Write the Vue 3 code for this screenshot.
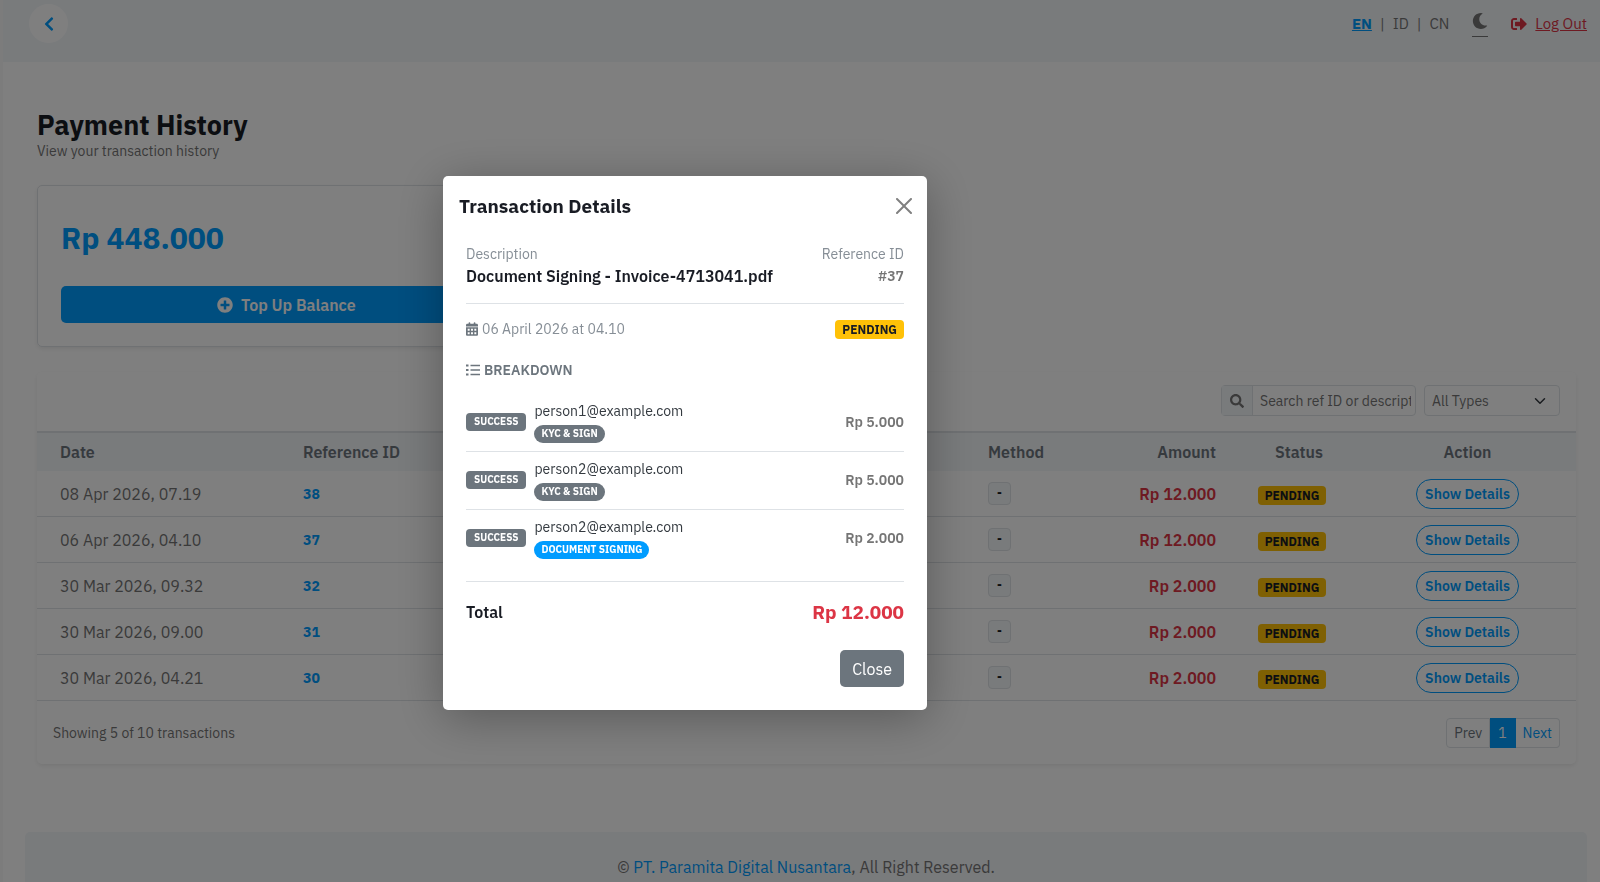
<template>
  <div class="page">
    <header class="topbar">
      <button class="back" type="button" aria-label="Back">
        <svg viewBox="0 0 320 512" width="10" height="16"><path d="M34.5 239L228.900 44.700c9.400-9.400 24.600-9.400 33.900 0l22.700 22.700c9.400 9.400 9.400 24.500 0 33.900L131.500 256l154 154.700c9.300 9.400 9.300 24.500 0 33.900l-22.700 22.700c-9.400 9.400-24.600 9.400-33.900 0L34.500 273c-9.400-9.400-9.400-24.600 0-34z" /></svg>
      </button>
      <nav class="top-nav">
        <div class="langs">
          <a href="#" class="active">EN</a><span>|</span><a href="#">ID</a><span>|</span><a href="#">CN</a>
        </div>
        <a href="#" class="theme" aria-label="Dark mode">
          <svg viewBox="0 0 512 512" width="16" height="16"><path d="M283.2 512c79 0 151.100-35.900 198.900-94.800 7.100-8.700-.6-21.400-11.600-19.300-124.200 23.600-238.300-71.600-238.300-197 0-72.200 38.700-138.600 101.500-174.400 9.700-5.500 7.300-20.200-3.700-22.200A258.200 258.200 0 0 0 283.200 0c-141.300 0-256 114.500-256 256 0 141.300 114.500 256 256 256z" /></svg>
        </a>
        <a href="#" class="logout">
          <svg viewBox="0 0 512 512" width="16" height="16"><path d="M497 273L329 441c-15 15-41 4.500-41-17v-96H152c-13.300 0-24-10.700-24-24v-96c0-13.300 10.700-24 24-24h136V88c0-21.400 25.900-32 41-17l168 168c9.300 9.400 9.300 24.600 0 34zM192 436v-40c0-6.600-5.400-12-12-12H96c-17.700 0-32-14.300-32-32V160c0-17.700 14.300-32 32-32h84c6.600 0 12-5.400 12-12V76c0-6.600-5.400-12-12-12H96c-53 0-96 43-96 96v192c0 53 43 96 96 96h84c6.600 0 12-5.400 12-12z" /></svg>
          <span>Log Out</span>
        </a>
      </nav>
    </header>

    <main class="content">
      <h1>Payment History</h1>
      <p class="subtitle">View your transaction history</p>

      <section class="balance">
        <div class="amount">Rp 448.000</div>
        <button class="topup" type="button">
          <svg viewBox="0 0 512 512" width="16" height="16"><path d="M256 8C119 8 8 119 8 256s111 248 248 248 248-111 248-248S393 8 256 8zm144 276c0 6.600-5.400 12-12 12h-92v92c0 6.600-5.400 12-12 12h-56c-6.600 0-12-5.400-12-12v-92h-92c-6.600 0-12-5.400-12-12v-56c0-6.600 5.400-12 12-12h92v-92c0-6.600 5.400-12 12-12h56c6.600 0 12 5.400 12 12v92h92c6.600 0 12 5.400 12 12v56z" /></svg>
          Top Up Balance
        </button>
      </section>

      <section class="history">
        <div class="toolbar">
          <div class="search">
            <label for="search" aria-label="Search">
              <svg viewBox="0 0 512 512" width="14" height="14"><path d="M505 442.700L405.300 343c-4.500-4.500-10.600-7-17-7H372c27.600-35.300 44-79.700 44-128C416 93.100 322.900 0 208 0S0 93.100 0 208s93.100 208 208 208c48.300 0 92.700-16.400 128-44v16.300c0 6.400 2.500 12.500 7 17l99.700 99.700c9.400 9.400 24.600 9.400 33.900 0l28.300-28.300c9.400-9.400 9.400-24.600.1-34zM208 336c-70.700 0-128-57.200-128-128 0-70.700 57.200-128 128-128 70.700 0 128 57.200 128 128 0 70.700-57.200 128-128 128z" /></svg>
            </label>
            <input id="search" v-model="keyword" type="text" placeholder="Search ref ID or description" />
          </div>
          <div class="filter">
            <select v-model="type" aria-label="Transaction type">
              <option value="">All Types</option>
            </select>
            <svg viewBox="0 0 16 16" width="12" height="12"><path d="m2 5 6 6 6-6" /></svg>
          </div>
        </div>

        <table>
          <colgroup>
            <col class="c-date" /><col class="c-ref" /><col /><col class="c-method" /><col class="c-amount" /><col class="c-status" /><col class="c-action" />
          </colgroup>
          <thead>
            <tr>
              <th>Date</th>
              <th>Reference ID</th>
              <th></th>
              <th>Method</th>
              <th class="right">Amount</th>
              <th class="center">Status</th>
              <th class="center">Action</th>
            </tr>
          </thead>
          <tbody>
            <tr v-for="t in transactions" :key="t.id">
              <td>{{ t.date }}</td>
              <td class="ref">{{ t.id }}</td>
              <td></td>
              <td><span class="method">-</span></td>
              <td class="right money">{{ t.amount }}</td>
              <td class="center"><span class="badge pending">PENDING</span></td>
              <td class="center"><button class="details" type="button" @click="open = true">Show Details</button></td>
            </tr>
          </tbody>
        </table>

        <div class="table-footer">
          <span>Showing 5 of 10 transactions</span>
          <div class="pagination">
            <button type="button" disabled>Prev</button>
            <button type="button" class="current">1</button>
            <button type="button">Next</button>
          </div>
        </div>
      </section>
    </main>

    <footer class="footer">
      © <a href="#">PT. Paramita Digital Nusantara</a>, All Right Reserved.
    </footer>

    <div v-if="open" class="backdrop" @click.self="open = false">
      <div class="modal" role="dialog" aria-labelledby="modal-title">
        <div class="modal-header">
          <h2 id="modal-title">Transaction Details</h2>
          <button type="button" class="x" aria-label="Close" @click="open = false">
            <svg viewBox="0 0 16 16" width="16" height="16"><path d="M.293.293a1 1 0 011.414 0L8 6.586 14.293.293a1 1 0 111.414 1.414L9.414 8l6.293 6.293a1 1 0 01-1.414 1.414L8 9.414l-6.293 6.293a1 1 0 01-1.414-1.414L6.586 8 .293 1.707a1 1 0 010-1.414z" /></svg>
          </button>
        </div>
        <div class="modal-body">
          <div class="summary">
            <div>
              <div class="label">Description</div>
              <div class="name">Document Signing - Invoice-4713041.pdf</div>
            </div>
            <div class="right">
              <div class="label">Reference ID</div>
              <div class="number">#37</div>
            </div>
          </div>

          <div class="when">
            <span class="label with-icon">
              <svg viewBox="0 0 448 512" width="12" height="14"><path fill-rule="evenodd" d="M128 0c17.700 0 32 14.300 32 32v32h128V32c0-17.700 14.300-32 32-32s32 14.300 32 32v32h48c26.500 0 48 21.500 48 48v48H0v-48c0-26.500 21.500-48 48-48h48V32c0-17.700 14.300-32 32-32zM0 192h448v272c0 26.500-21.500 48-48 48H48c-26.500 0-48-21.500-48-48zM64 248v72h72v-72zM188 248v72h72v-72zM312 248v72h72v-72zM64 376v72h72v-72zM188 376v72h72v-72zM312 376v72h72v-72z" /></svg>
              06 April 2026 at 04.10
            </span>
            <span class="badge pending">PENDING</span>
          </div>

          <h3 class="with-icon">
            <svg viewBox="0 0 14 14" width="14" height="14"><path d="M0 1.500h2.500v2H0zM0 6h2.500v2H0zM0 10.500h2.500v2H0zM4.500 1.800H14v1.400H4.500zM4.500 6.300H14v1.400H4.500zM4.500 10.800H14v1.400H4.500z" /></svg>
            BREAKDOWN
          </h3>

          <ul class="items">
            <li v-for="(item, i) in items" :key="i">
              <span class="badge small">SUCCESS</span>
              <div class="who">
                <div class="email">{{ item.email }}</div>
                <span class="badge small pill" :class="{ blue: item.kind === 'DOCUMENT SIGNING' }">{{ item.kind }}</span>
              </div>
              <span class="number">{{ item.price }}</span>
            </li>
          </ul>

          <div class="total">
            <span>Total</span>
            <strong>Rp 12.000</strong>
          </div>

          <div class="actions">
            <button type="button" class="close" @click="open = false">Close</button>
          </div>
        </div>
      </div>
    </div>
  </div>
</template>

<script setup>
import { ref } from 'vue'

const open = ref(true)
const keyword = ref('')
const type = ref('')

const transactions = [
  { id: 38, date: '08 Apr 2026, 07.19', amount: 'Rp 12.000' },
  { id: 37, date: '06 Apr 2026, 04.10', amount: 'Rp 12.000' },
  { id: 32, date: '30 Mar 2026, 09.32', amount: 'Rp 2.000' },
  { id: 31, date: '30 Mar 2026, 09.00', amount: 'Rp 2.000' },
  { id: 30, date: '30 Mar 2026, 04.21', amount: 'Rp 2.000' },
]

const items = [
  { email: 'person1@example.com', kind: 'KYC & SIGN', price: 'Rp 5.000' },
  { email: 'person2@example.com', kind: 'KYC & SIGN', price: 'Rp 5.000' },
  { email: 'person2@example.com', kind: 'DOCUMENT SIGNING', price: 'Rp 2.000' },
]
</script>

<style>
body { margin: 0; overflow: hidden; background: #fff; }
</style>

<style scoped>
* { box-sizing: border-box; }
.page { height: 100vh; overflow: hidden; border-left: 3px solid #f8f8f8; font-family: "IBM Plex Sans", Roboto, sans-serif; font-size: 16px; line-height: 24px; color: #757575; }
svg { fill: currentColor; flex: none; }
button, input, select { font: inherit; color: inherit; margin: 0; }
button { cursor: pointer; }
a { color: inherit; }

.topbar { display: flex; justify-content: space-between; align-items: flex-start; height: 62px; padding: 4px 13px 0 26px; background: #f3f6f9; }
.back { display: flex; align-items: center; justify-content: center; width: 39px; height: 39px; padding: 0; border: 0; border-radius: 50%; background: #fff; color: #009cff; }
.top-nav { display: flex; align-items: center; height: 39px; gap: 23px; font-size: 15px; }
.langs { display: flex; gap: 8px; }
.langs a { text-decoration: none; }
.langs .active { color: #009cff; font-weight: 700; text-decoration: underline; }
.theme { display: flex; padding: 3px 0 7px; border-bottom: 1px solid #757575; }
.logout { display: flex; align-items: center; gap: 8px; color: #dc3545; text-decoration: none; }
.logout span { text-decoration: underline; }

.content { padding: 47px 24px 68px 34px; }
h1 { margin: 0; font-size: 27px; line-height: 32px; font-weight: 700; color: #191c24; }
.subtitle { margin: 0; font-size: 14px; line-height: 20px; }

.balance { width: 32.4%; margin-top: 24px; padding: 32px 23px 23px; border: 1px solid #dee2e6; border-radius: 5px; box-shadow: 0 2px 4px rgba(0, 0, 0, .075); }
.amount { font-size: 30px; line-height: 40px; font-weight: 700; color: #009cff; }
.topup { display: flex; align-items: center; justify-content: center; gap: 8px; width: 100%; height: 37px; margin-top: 28px; border: 0; border-radius: 5px; background: #009cff; color: #fff; font-weight: 600; }

.history { margin-top: 25px; border-radius: 5px; box-shadow: 0 2px 4px rgba(0, 0, 0, .075); }
.toolbar { display: flex; justify-content: flex-end; gap: 8px; padding: 13px 16px 15px; font-size: 14px; }
.search { display: flex; width: 195px; height: 31px; border: 1px solid #dee2e6; border-radius: 4px; }
.search label { display: flex; align-items: center; justify-content: center; width: 31px; background: #f3f6f9; border-right: 1px solid #dee2e6; }
.search input { flex: 1; min-width: 0; padding: 0 4px 0 7px; border: 0; background: none; }
.search input::placeholder { color: #757575; }
.filter { display: grid; align-items: center; width: 136px; }
.filter select { grid-area: 1 / 1; width: 100%; height: 31px; padding: 0 7px; border: 1px solid #dee2e6; border-radius: 4px; background: #fff; appearance: none; }
.filter svg { grid-area: 1 / 1; justify-self: end; margin-right: 14px; fill: none; stroke: #343a40; stroke-width: 2; stroke-linecap: round; stroke-linejoin: round; pointer-events: none; }

table { width: 100%; table-layout: fixed; border-spacing: 0; }
.c-date { width: 258px; }
.c-ref { width: 200px; }
.c-method { width: 112px; }
.c-amount { width: 132px; }
.c-status { width: 150px; }
.c-action { width: 202px; }
th, td { padding: 0 8px; text-align: left; border-bottom: 1px solid #dee2e6; }
th { height: 40px; background: #f3f6f9; font-weight: 600; color: #6c757d; border-top: 2px solid #dee2e6; border-bottom: 0; }
td { height: 46px; }
th:first-child, td:first-child { padding-left: 23px; }
th:last-child, td:last-child { padding-right: 23px; }
th.center, td.center { text-align: center; }
.right, th.right { text-align: right; }
.ref { color: #009cff; font-size: 14px; font-weight: 700; }
.money { color: #dc3545; font-weight: 600; }
.method { display: block; width: 23px; height: 23px; border: 1px solid #dee2e6; border-radius: 4px; background: #f3f6f9; color: #191c24; font-size: 12px; line-height: 20px; font-weight: 700; text-align: center; }
td .badge { margin-right: 14px; }
.details { height: 30px; padding: 0 8px; border: 1px solid #009cff; border-radius: 15px; background: none; color: #009cff; font-size: 14px; font-weight: 600; }

.table-footer { display: flex; align-items: center; justify-content: space-between; padding: 17px 16px 16px; font-size: 14px; }
.pagination { display: flex; }
.pagination button { height: 30px; padding: 0 7px; border: 1px solid #dee2e6; border-left: 0; background: #fff; color: #009cff; }
.pagination button:first-child { border-left: 1px solid #dee2e6; border-radius: 4px 0 0 4px; color: #6c757d; }
.pagination button:last-child { border-radius: 0 4px 4px 0; }
.pagination .current { padding: 0 8px; border-color: #009cff; background: #009cff; color: #fff; }

.footer { margin: 0 13px 0 22px; padding: 23px; border-radius: 5px 5px 0 0; background: #f3f6f9; text-align: center; }
.footer a { color: #009cff; text-decoration: none; }

.badge { display: inline-block; padding: 0 7px; border-radius: 4px; background: #6c757d; color: #fff; font-size: 12px; line-height: 19px; font-weight: 700; }
.badge.pending { background: #ffc107; color: #191c24; }
.badge.small { padding: 0 8px; font-size: 10px; line-height: 18px; }
.badge.pill { padding: 0 7px; border-radius: 9px; }
.badge.blue { background: #009cff; }

.backdrop { position: fixed; inset: 0; display: flex; justify-content: center; align-items: flex-start; padding: 176px 230px 0 0; background: rgba(0, 0, 0, .5); }
.modal { width: 484px; border-radius: 5px; background: #fff; box-shadow: 0 8px 48px rgba(0, 0, 0, .3); }
.modal-header { display: flex; justify-content: space-between; align-items: center; height: 60px; padding: 0 15px 0 16px; }
h2 { margin: 0; font-size: 19px; line-height: 24px; font-weight: 700; color: #191c24; }
.x { display: flex; padding: 0; border: 0; background: none; color: #808080; }
.modal-body { padding: 8px 23px 23px; }
.summary { display: flex; justify-content: space-between; padding-bottom: 15px; border-bottom: 1px solid #dee2e6; }
.label { font-size: 14px; line-height: 20px; color: #868e96; }
.name { font-weight: 600; color: #191c24; }
.number { font-size: 14px; font-weight: 600; }
.when { display: flex; justify-content: space-between; align-items: center; padding-top: 15px; }
.with-icon { display: flex; align-items: center; gap: 4px; }
.with-icon svg { color: #6c757d; }
h3 { margin: 21px 0 0; font-size: 14px; line-height: 20px; font-weight: 600; color: #6c757d; }
.items { margin: 14px 0 0; padding: 0; list-style: none; }
.items li { display: flex; align-items: center; gap: 8px; padding: 7px 0 8px; border-bottom: 1px solid #dee2e6; }
.items li:last-child { border-bottom: 0; }
.who { display: flex; flex: 1; flex-direction: column; align-items: flex-start; gap: 4px; }
.email { font-size: 14px; line-height: 20px; color: #343a40; }
.total { display: flex; justify-content: space-between; align-items: center; margin-top: 14px; padding-top: 16px; border-top: 1px solid #dee2e6; line-height: 28px; font-weight: 600; color: #191c24; }
.total strong { font-size: 19px; font-weight: 700; color: #dc3545; }
.actions { display: flex; justify-content: flex-end; margin-top: 24px; }
.close { height: 37px; padding: 0 12px; border: 0; border-radius: 5px; background: #6c757d; color: #fff; }
</style>
